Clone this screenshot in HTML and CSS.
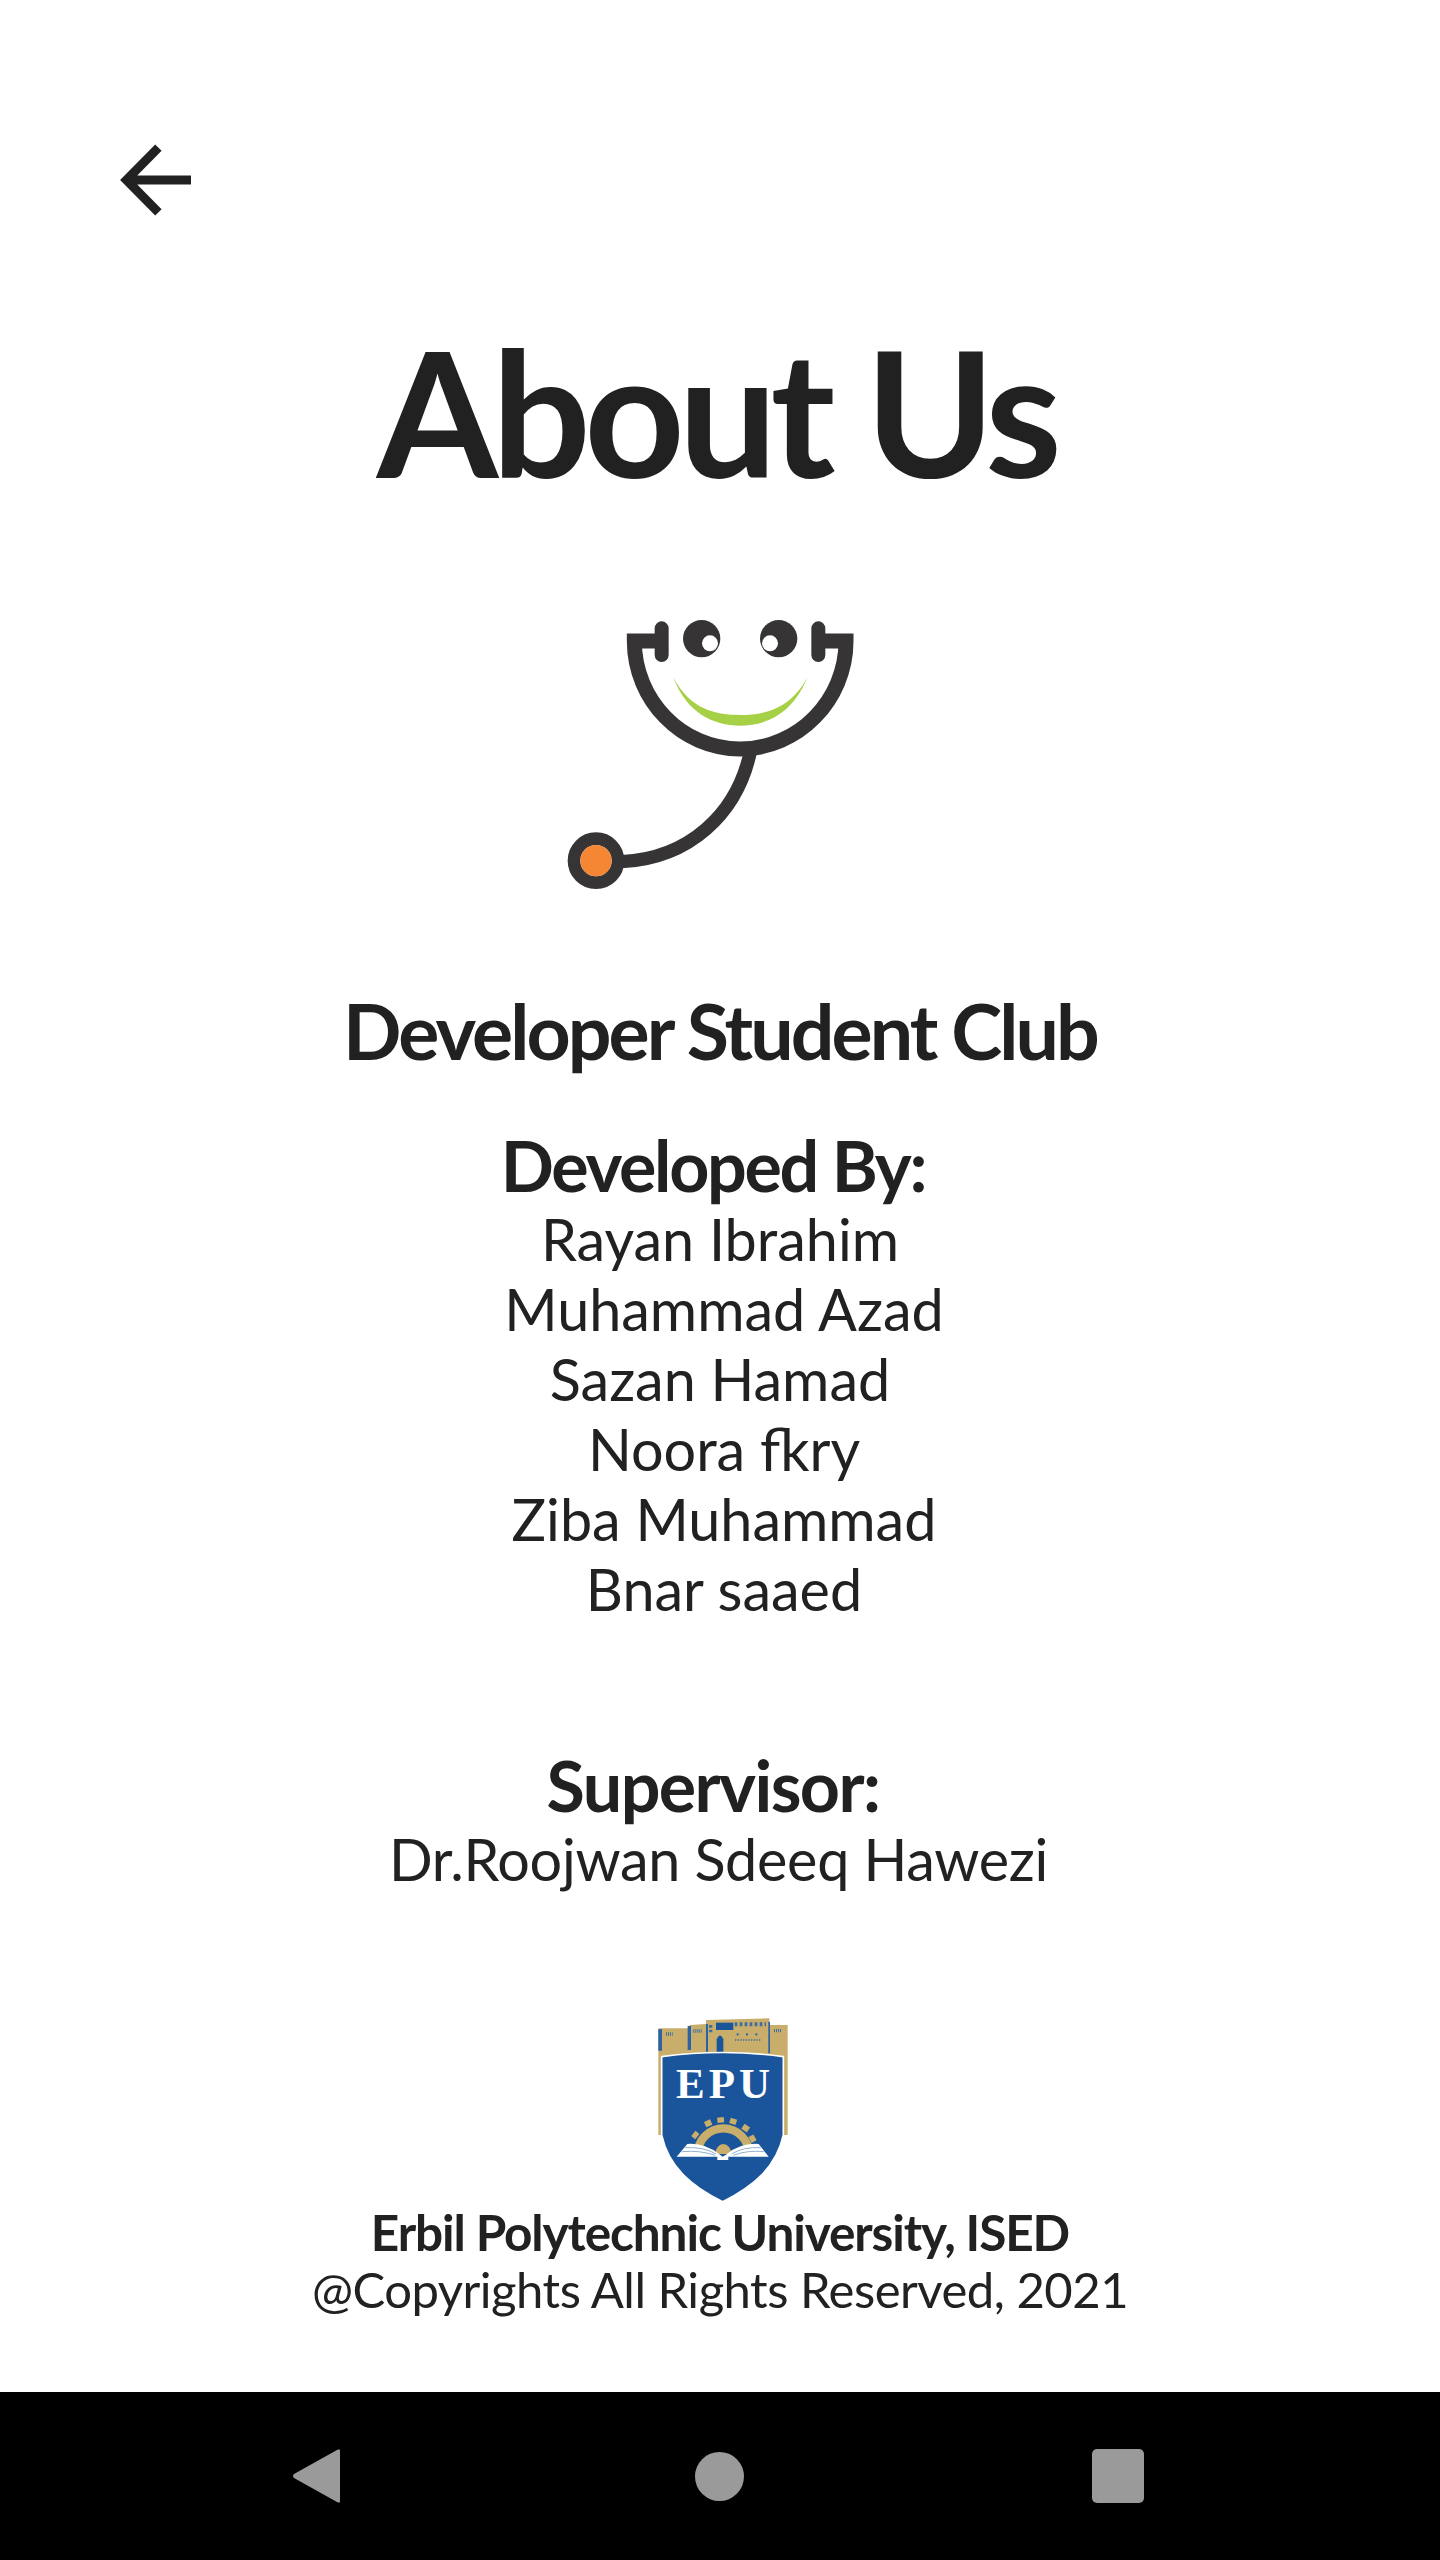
FILE: index.html
```html
<!DOCTYPE html>
<html lang="en">
<head>
<meta charset="utf-8">
<title>About Us</title>
<link rel="stylesheet" href="styles.css">
</head>
<body>
<div class="screen">
  <main class="content">
    <header class="topbar">
      <svg class="back" viewBox="0 0 72 72" aria-label="Back"><path d="M71 36H10M38.4 3.6 6.4 36l32 32.4" fill="none" stroke="#212121" stroke-width="9"/></svg>
    </header>
    <h1 class="title">About Us</h1>
    <svg class="logo" viewBox="0 0 1080 960" aria-label="Developer Student Club logo">
      <g fill="none" stroke="#373435">
        <path d="M365 153H283C283 330 425 477 600 477S918 330 918 153H835" stroke-width="45"/>
        <path d="M365 115V195M835 115V195" stroke-width="42" stroke-linecap="round"/>
        <path d="M630 490C590 670 450 805 245 815" stroke-width="40"/>
        <circle cx="168" cy="812" r="66" stroke-width="38"/>
      </g>
      <circle cx="168" cy="812" r="47" fill="#f58634"/>
      <circle cx="485" cy="146" r="56" fill="#373435"/>
      <circle cx="716" cy="146" r="56" fill="#373435"/>
      <circle cx="510" cy="160" r="24" fill="#fff"/>
      <circle cx="690" cy="160" r="24" fill="#fff"/>
      <path d="M400 262C450 360 530 375 600 375S750 360 802 262C760 370 680 407 600 407S440 370 400 262Z" fill="#a6d146"/>
    </svg>
    <h2 class="club">Developer Student Club</h2>
    <section class="block">
      <h3 class="heading shift-l8">Developed By:</h3>
      <p class="name">Rayan Ibrahim</p>
      <p class="name shift-r6">Muhammad Azad</p>
      <p class="name">Sazan Hamad</p>
      <p class="name shift-r6">Noora fkry</p>
      <p class="name shift-r6">Ziba Muhammad</p>
      <p class="name shift-r6">Bnar saaed</p>
    </section>
    <section class="block supervisor">
      <h3 class="heading heading-open shift-l8">Supervisor:</h3>
      <p class="name name-tight">Dr.Roojwan Sdeeq Hawezi</p>
    </section>
    <svg class="epu" viewBox="0 0 480 609" aria-label="EPU logo">
      <path d="M55 85H142L150 75 198 72V60L388 55V75H443V405H55Z" fill="#c8ae6a"/>
      <path d="M55 88H66V152H55ZM143 78H153V150H143ZM198 72H204V155H198ZM385 65H390V160H385Z" fill="#2a62a5"/>
      <path d="M230 157V118Q240 95 250 118V157Z" fill="#1a559b"/>
      <path d="M228 68H280V90H228Z" fill="#1a559b"/>
      <g fill="none" stroke="#3f6d9f">
        <path d="M284 73H378" stroke-width="12" stroke-dasharray="8 7"/>
        <path d="M290 103H365" stroke-width="7" stroke-dasharray="6 22"/>
        <path d="M285 120H365" stroke-width="4" stroke-dasharray="4 4"/>
        <path d="M78 102H98M160 93H186M402 92H424" stroke-width="10" stroke-dasharray="3 3"/>
        <path d="M212 75V100" stroke-width="10" stroke-dasharray="8 6"/>
      </g>
      <path d="M65 170Q248 145 430 170V405C410 500 340 560 248 605 155 560 85 500 65 405Z" fill="#1a559b" stroke="#fff" stroke-width="5"/>
      <text x="108" y="293" class="epu-text">EPU</text>
      <g fill="none" stroke="#c8ae6a">
        <path d="M173 462A77 77 0 0 1 327 462" stroke-width="25"/>
        <path d="M172 410 160 400M208 378 201 362M243 368 241 352M277 372 282 356M312 392 322 377M330 420 345 412" stroke-width="20"/>
      </g>
      <path d="M226 462A24 30 0 0 1 274 462Z" fill="#c8ae6a"/>
      <path d="M110 470 142 432Q195 428 240 464L248 470 258 464Q300 428 356 432L386 470H265V480H232V470Z" fill="#fff"/>
      <path d="M135 443Q190 440 228 462M125 455Q180 450 225 466M275 462Q310 440 362 443M280 466Q320 450 372 455" fill="none" stroke="#8fb0d6" stroke-width="3"/>
    </svg>
    <p class="univ">Erbil Polytechnic University, ISED</p>
    <p class="copy">@Copyrights All Rights Reserved, 2021</p>
  </main>
  <nav class="navbar">
    <svg class="nav-back" viewBox="0 0 50 56"><path d="M48 3V53Q48 56 45 54L2 30Q0 28 2 26L45 2Q48 0 48 3Z" fill="#9a9a9a"/></svg>
    <span class="nav-home"></span>
    <span class="nav-recent"></span>
  </nav>
</div>
</body>
</html>
```

FILE: styles.css
```css
* { box-sizing: border-box; }
html, body { margin: 0; padding: 0; }
body { background: #fff; font-family: Lato, "Liberation Sans", sans-serif; color: #212121; }
.screen { width: 1440px; height: 2560px; display: flex; flex-direction: column; }
.content { flex: 1; display: flex; flex-direction: column; align-items: center; }
.topbar { width: 100%; height: 310px; padding: 144px 0 0 120px; }
.back { display: block; width: 72px; height: 72px; }
.title { margin: 0; padding-right: 8px; font-size: 175px; line-height: 200px; font-weight: 700; letter-spacing: -6.5px; height: 220px; }
.logo { display: block; width: 360px; height: 320px; margin-top: 60px; }
.club { margin: 78px 0 0; font-size: 77px; line-height: 84px; font-weight: 700; letter-spacing: -2.9px; }
.block { display: flex; flex-direction: column; align-items: center; margin-top: 54px; }
.supervisor { margin-top: 122px; }
.heading { margin: 0; font-size: 70px; line-height: 78px; font-weight: 700; letter-spacing: -2.3px; }
.heading-open { letter-spacing: -1.6px; }
.name { margin: 0; font-size: 57.5px; line-height: 70px; font-weight: 400; }
.name-tight { letter-spacing: -0.3px; padding-right: 3px; }
.shift-l8 { padding-right: 14px; }
.shift-r6 { padding-left: 8px; }
.epu { display: block; width: 160px; height: 203px; margin-top: 106px; }
.epu-text { font-family: "Liberation Serif", serif; font-size: 129px; font-weight: 700; letter-spacing: 12px; fill: #fff; }
.univ { margin: 0; font-size: 49.5px; line-height: 58px; font-weight: 700; letter-spacing: -1.1px; }
.copy { margin: 0; font-size: 49px; line-height: 56px; letter-spacing: -0.5px; }
.navbar { height: 168px; background: #000; display: grid; grid-template-columns: 292px 50px 353px 49px 348px 52px 1fr; align-items: center; }
.nav-back { grid-column: 2; display: block; width: 50px; height: 56px; }
.nav-home { grid-column: 4; width: 49px; height: 49px; border-radius: 50%; background: #9a9a9a; }
.nav-recent { grid-column: 6; width: 52px; height: 54px; border-radius: 5px; background: #9a9a9a; }
```
